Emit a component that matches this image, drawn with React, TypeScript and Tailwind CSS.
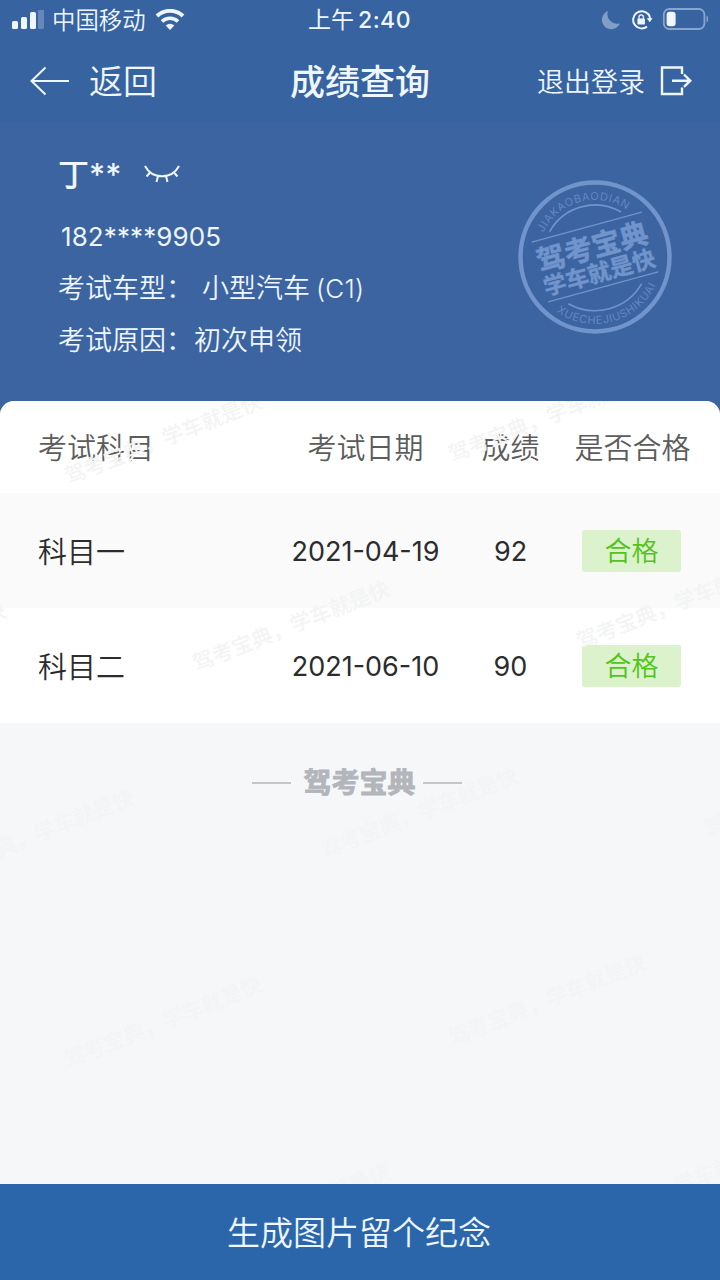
import { useState } from 'react';
import clsx from 'clsx';

type Score = {
  subject: string;
  date: string;
  score: number;
  result: string;
};

const scores: Score[] = [
  { subject: '科目一', date: '2021-04-19', score: 92, result: '合格' },
  { subject: '科目二', date: '2021-06-10', score: 90, result: '合格' },
];

// bottom-left corner of every watermark, relative to the content area
const watermarks = [
  [70, 88],
  [454, 66],
  [-186, 297],
  [198, 275],
  [582, 253],
  [-58, 484],
  [326, 462],
  [710, 440],
  [70, 671],
  [454, 649],
  [198, 858],
  [582, 836],
];

function StatusBar() {
  return (
    <div className="grid h-10 grid-cols-[1fr_auto_1fr] items-center pl-3 pr-[11px] text-[#eef6ff]">
      <div className="flex items-center">
        <svg width="33" height="20" viewBox="0 0 33 20" fill="currentColor">
          <rect x="0" y="11" width="6" height="8" rx="1.5" />
          <rect x="9" y="7" width="6" height="12" rx="1.5" />
          <rect x="18" y="2" width="6" height="17" rx="1.5" />
          <rect x="26" y="-1" width="6" height="20" rx="1.5" opacity="0.25" />
        </svg>
        <span className="ml-[7px] pt-px text-[23.4px] font-[350] leading-[38px]">中国移动</span>
        <svg className="ml-[9px]" width="30" height="22" viewBox="0 0 30 22" fill="none" stroke="currentColor">
          <path d="M2 7a19 19 0 0 1 26 0" strokeWidth="4" />
          <path d="M7 12.5a11.5 11.5 0 0 1 16 0" strokeWidth="3.6" />
          <path d="M15 21l-4.300-4.600a6.200 6.200 0 0 1 8.600 0z" fill="currentColor" stroke="none" />
        </svg>
      </div>
      <div className="flex items-center pr-0.5 leading-10">
        <span className="text-[23px]">上午</span>
        <span className="ml-1 text-[23px] font-medium tracking-[0.5px]">2:40</span>
      </div>
      <div className="flex items-center justify-end">
        <svg width="20" height="20" viewBox="0 0 20 20" fill="currentColor" opacity="0.4">
          <path d="M7 1a9.400 9.400 0 1 0 12 12.300A9.600 9.600 0 0 1 7 1z" />
        </svg>
        <svg className="ml-2.5" width="22" height="22" viewBox="0 0 22 22" fill="none" stroke="currentColor">
          <path d="M17.200 5.200A8.600 8.600 0 1 0 16 17.600" strokeWidth="2" />
          <path d="M17 4.500a8.600 8.600 0 0 1 1.900 5.500" strokeWidth="2" />
          <path d="M15.800 9.200h5.800l-2.900 4z" fill="currentColor" stroke="none" />
          <rect x="6.400" y="9.600" width="7.600" height="6" rx="1" fill="currentColor" stroke="none" />
          <path d="M8 10V8a2.200 2.200 0 0 1 4.400 0v2" strokeWidth="1.300" />
        </svg>
        <svg className="ml-[9px]" width="47" height="24" viewBox="0 0 47 24" fill="currentColor">
          <rect x="1.800" y="1" width="40.600" height="20" rx="5.500" fill="none" stroke="currentColor" strokeWidth="1.800" opacity="0.45" />
          <rect x="4.600" y="3.700" width="9" height="14.500" rx="3" />
          <path d="M44.500 7.500c2.200.8 2.200 6.200 0 7z" opacity="0.45" />
        </svg>
      </div>
    </div>
  );
}

function NavBar() {
  return (
    <div className="grid h-[82px] grid-cols-[1fr_auto_1fr] items-center pl-[30px] pr-7 text-[#eef6ff]">
      <button type="button" className="flex items-center">
        <svg width="40" height="30" viewBox="0 0 40 30" fill="none" stroke="currentColor" strokeWidth="2">
          <path d="M15.500 1.500 1.500 15l14 13.500M1.500 15H39" />
        </svg>
        <span className="ml-[19px] pt-[1px] text-[34px] font-[350] leading-none">返回</span>
      </button>
      <h1 className="pr-0.5 pt-0.5 text-[35px] font-medium leading-none">成绩查询</h1>
      <button type="button" className="flex items-center justify-end">
        <span className="pt-0.5 text-[27px] font-[350] leading-none">退出登录</span>
        <svg className="ml-[15px]" width="32" height="30" viewBox="0 0 32 30" fill="none" stroke="currentColor" strokeWidth="2.400">
          <path d="M22 8V1.500H2v26.500h20V21.500M12 14.700h18M24 8.500l6.300 6.200-6.300 6.200" />
        </svg>
      </button>
    </div>
  );
}

function Stamp() {
  return (
    <svg className="absolute left-[517px] top-[57px]" width="156" height="156" viewBox="-78 -78 156 156" fill="none" stroke="#7094cb">
      <defs>
        <path id="stamp-top" d="M-57 0A57 57 0 0 1 57 0" />
        <path id="stamp-bottom" d="M-67 0A67 67 0 0 0 67 0" />
      </defs>
      <circle r="74.500" strokeWidth="4.500" />
      <g transform="rotate(-15.300)">
        <path d="M-57-31H57M-57 31H57" strokeWidth="1.300" />
        <path d="M-37-36.500A52 52 0 0 1 37-36.500M-38 38A54 54 0 0 0 38 38" strokeWidth="1.600" />
        <g fill="#7094cb" textAnchor="middle">
          <text y="0" fontSize="28.500" fontWeight="700" strokeWidth="0.600">驾考宝典</text>
          <text y="24.500" fontSize="23" fontWeight="700" strokeWidth="0.400">学车就是快</text>
          <g stroke="none" fontSize="11" letterSpacing="0.700" opacity="0.75">
            <text>
              <textPath href="#stamp-top" startOffset="50%">JIAKAOBAODIAN</textPath>
            </text>
            <text>
              <textPath href="#stamp-bottom" startOffset="50%">XUECHEJIUSHIKUAI</textPath>
            </text>
          </g>
        </g>
      </g>
    </svg>
  );
}

function Profile() {
  const [hidden, setHidden] = useState(true);

  return (
    <div className="relative h-[279px] pl-[58px] pt-[26px] text-[27px] text-[#eef6ff]">
      <div className="flex h-[52px] items-center">
        <span className="pt-0.5 text-[31px] font-medium">{hidden ? '丁**' : '丁'}</span>
        <button type="button" className="ml-[23px]" onClick={() => setHidden(!hidden)}>
          <svg width="36" height="20" viewBox="0 0 36 20" fill="none" stroke="currentColor" strokeWidth="2">
            <path d="M1 2C8 15.500 28 15.500 35 2M6.500 8 2.500 12.500M29.500 8l4 4.500M14 12l-1.500 6M22 12l1.500 6" />
          </svg>
        </button>
      </div>
      <p className="mt-[11px] pl-[3px] text-[26px] leading-[52px] tracking-[0.100px]">182****9905</p>
      <p className="flex font-[350] leading-[52px]">
        <span>考试车型：</span>
        <span className="ml-[9px]">小型汽车</span>
        <span className="ml-1.5 text-[26px] tracking-[0.300px]">(C1)</span>
      </p>
      <p className="flex font-[350] leading-[52px]">
        <span>考试原因：</span>
        <span className="ml-px">初次申领</span>
      </p>
      <Stamp />
    </div>
  );
}

function ScoreTable() {
  return (
    <div className="overflow-hidden rounded-t-[14px] bg-white text-center text-[29px] font-[350]">
      <div className="grid h-[92px] grid-cols-[275px_181px_109px_135px] items-center pt-[3px] text-[#5c5c5c]">
        <span className="pl-[38px] text-left">考试科目</span>
        <span>考试日期</span>
        <span>成绩</span>
        <span>是否合格</span>
      </div>
      {scores.map((item, index) => (
        <div
          key={item.subject}
          className={clsx(
            'grid h-[115px] grid-cols-[275px_181px_109px_133px] items-center text-[#2c2c2c]',
            index % 2 === 0 && 'bg-[#fafafa]',
          )}
        >
          <span className="pl-[38px] pt-1 text-left">{item.subject}</span>
          <span className="pt-[3px] text-[27px] font-normal">{item.date}</span>
          <span className="pt-[3px] text-[27px] font-normal">{item.score}</span>
          <span className="mx-auto h-[42px] w-[99px] rounded-[3px] bg-[#dbf2cd] text-[27px] leading-[44px] text-[#52c41a]">
            {item.result}
          </span>
        </div>
      ))}
    </div>
  );
}

export default function App() {
  return (
    <div className="flex h-[1280px] w-[720px] flex-col overflow-hidden bg-[#3c64a1] font-['Inter','Noto_Sans_CJK_SC',sans-serif]">
      <header className="bg-[#3763a1]">
        <StatusBar />
        <NavBar />
      </header>
      <Profile />
      <main className="relative flex-1 overflow-hidden rounded-t-[14px] bg-[#f5f7f9]">
        <ScoreTable />
        <div className="mt-[42px] flex items-center justify-center gap-[7px] pr-1.5 text-[#b2b5ba]">
          <i className="mr-[5px] h-0.5 w-[39px] bg-[#c3c6ca]" />
          <span className="text-[28px] font-bold leading-9 [-webkit-text-stroke:0.800px_#b2b5ba]">驾考宝典</span>
          <i className="h-0.5 w-[39px] bg-[#c3c6ca]" />
        </div>
        <div className="pointer-events-none absolute inset-0 select-none">
          {watermarks.map(([x, y]) => (
            <span
              key={`${x},${y}`}
              className="absolute origin-bottom-left -rotate-[21.5deg] whitespace-nowrap text-[21px] font-medium leading-6 text-[#f3f4f4]"
              style={{ left: x, top: y - 24 }}
            >
              驾考宝典，学车就是快
            </span>
          ))}
        </div>
      </main>
      <button type="button" className="h-24 bg-[#2c66aa] pr-0.5 pt-1 text-[33px] font-[350] text-[#eef6ff]">
        生成图片留个纪念
      </button>
    </div>
  );
}
